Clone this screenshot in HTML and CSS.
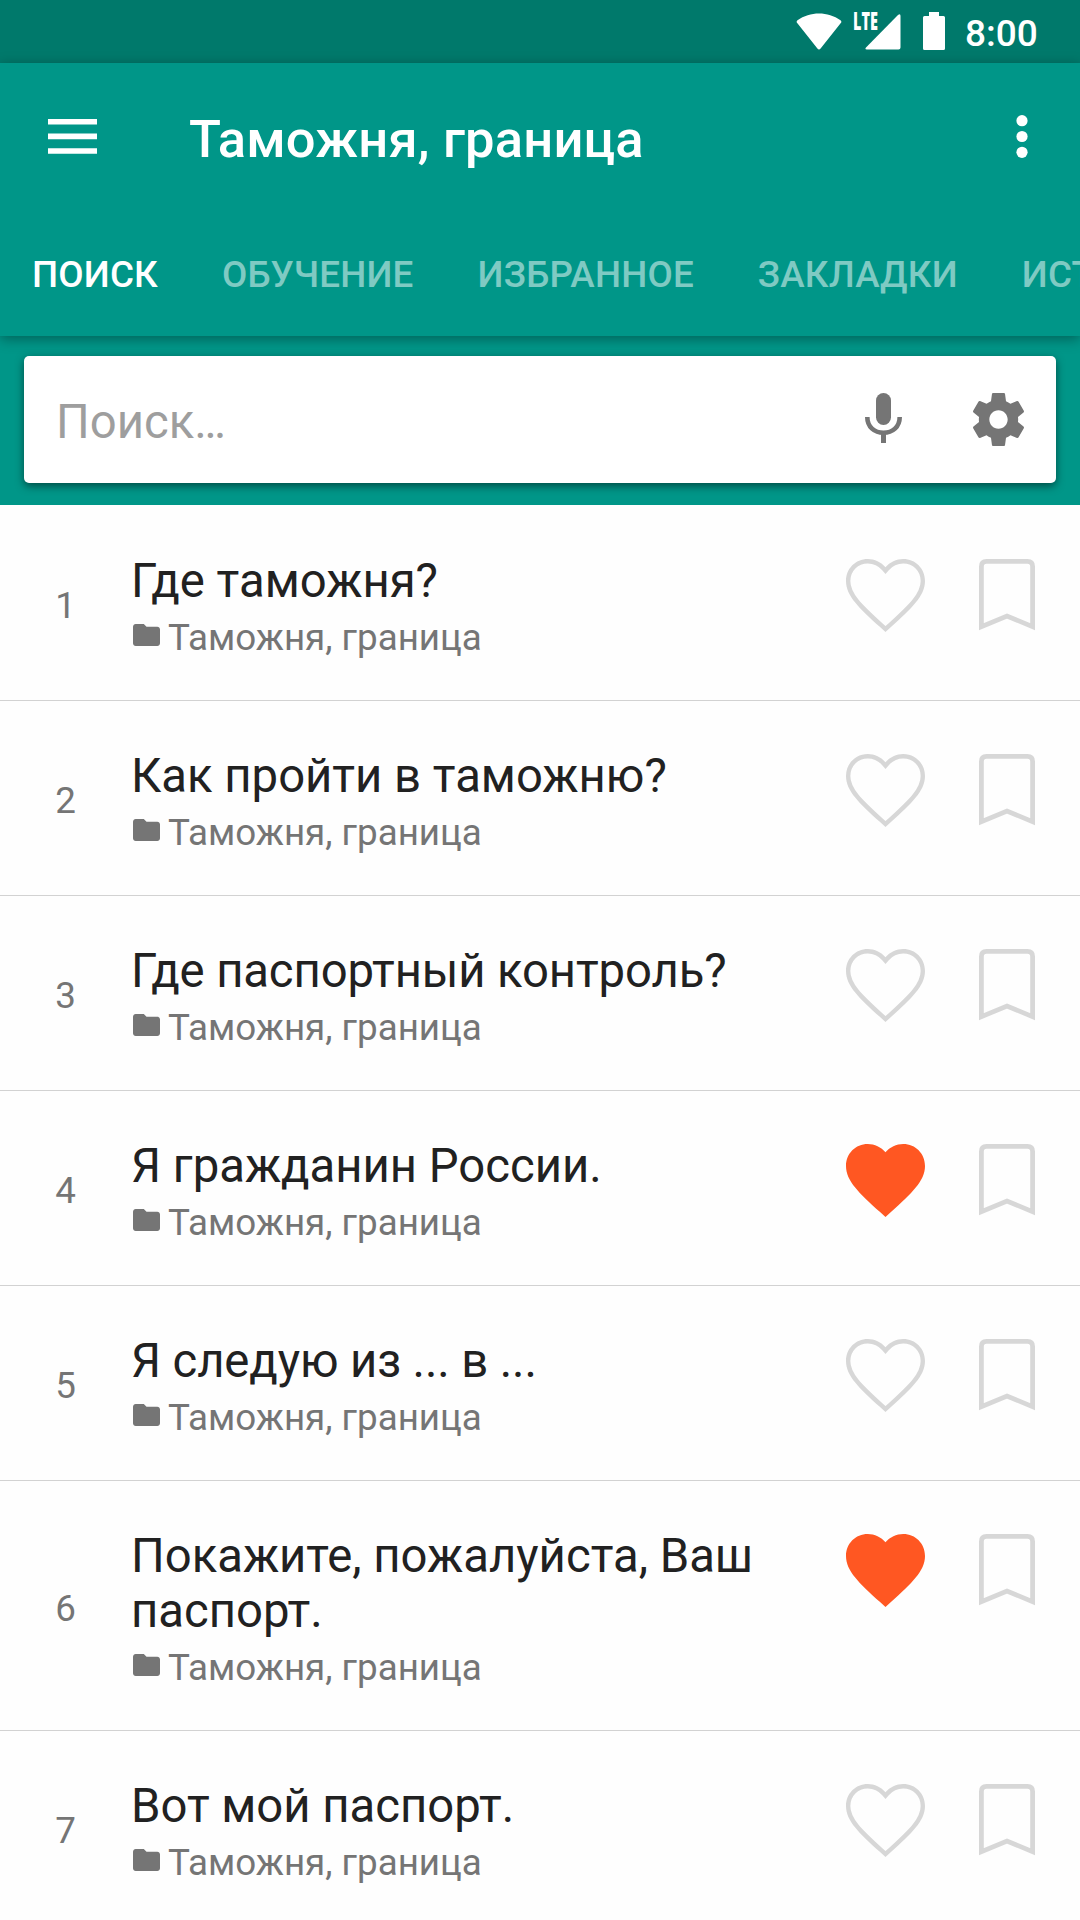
FILE: index.html
```html
<!DOCTYPE html>
<html lang="ru">
<head>
<meta charset="utf-8">
<title>Таможня, граница</title>
<link rel="stylesheet" href="styles.css">
</head>
<body>
<svg class="defs" aria-hidden="true">
  <defs>
    <path id="heart-shape" d="M12 21.35l-1.45-1.32C5.4 15.36 2 12.28 2 8.5 2 5.42 4.42 3 7.5 3c1.74 0 3.41.81 4.5 2.09C13.09 3.81 14.76 3 16.5 3 19.58 3 22 5.42 22 8.5c0 3.78-3.4 6.86-8.55 11.54L12 21.35z"/>
    <clipPath id="heart-clip"><use href="#heart-shape"/></clipPath>
    <symbol id="heart" viewBox="2 3 20 18.35" preserveAspectRatio="none"><use href="#heart-shape" clip-path="url(#heart-clip)" fill="none" stroke="currentColor" stroke-width="2.2"/></symbol>
    <symbol id="heart-full" viewBox="2 3 20 18.35" preserveAspectRatio="none"><use href="#heart-shape" fill="currentColor"/></symbol>
    <symbol id="bookmark" viewBox="0 0 56 72"><path d="M2.4 67.6V7.5Q2.4 2.4 7.5 2.4H48.5Q53.6 2.4 53.6 7.5V67.6L28 57Z" fill="none" stroke="currentColor" stroke-width="4.8" stroke-miterlimit="10"/></symbol>
    <symbol id="folder" viewBox="2 4 20 16" preserveAspectRatio="none"><path fill="currentColor" d="M10 4H4c-1.100 0-1.990.9-1.990 2L2 18c0 1.100.9 2 2 2h16c1.100 0 2-.9 2-2V8c0-1.100-.9-2-2-2h-8l-2-2z"/></symbol>
  </defs>
</svg>
<div class="screen">
  <header class="status">
    <svg class="wifi" viewBox="0 0 46 37"><path fill="#fff" d="M1.200 10C0.300 9 .5 8 1.500 7.300C14-1.700 32-1.700 44.500 7.300C45.500 8 45.700 9 44.800 10L24.600 35.500Q23 37.300 21.400 35.500Z"/></svg>
    <div class="cell">
      <span class="lte">LTE</span>
      <svg class="signal" viewBox="0 0 36 36"><path fill="#fff" d="M1 33.500L33 .9Q35.500-.8 35.500 2V33.500Q35.500 35.500 33.500 35.500H1.800Q-.5 35.300 1 33.500Z"/></svg>
    </div>
    <svg class="battery" viewBox="0 0 22 38"><path fill="#fff" d="M6 0H16V4H20.500Q22 4 22 5.500V36.500Q22 38 20.500 38H1.500Q0 38 0 36.500V5.500Q0 4 1.500 4H6Z"/></svg>
    <span class="time">8:00</span>
  </header>
  <div class="appbar">
    <div class="toolbar">
      <svg class="menu" viewBox="0 0 49 35"><path fill="#fff" d="M0 0H49V5.600H0ZM0 14.600H49V20.200H0ZM0 29.200H49V34.800H0Z"/></svg>
      <h1 class="title">Таможня, граница</h1>
      <svg class="more" viewBox="0 0 12 43"><g fill="#fff"><circle cx="6" cy="5.700" r="5.600"/><circle cx="6" cy="21.500" r="5.600"/><circle cx="6" cy="37.300" r="5.600"/></g></svg>
    </div>
    <nav class="tabs">
      <span class="tab active">ПОИСК</span>
      <span class="tab">ОБУЧЕНИЕ</span>
      <span class="tab">ИЗБРАННОЕ</span>
      <span class="tab">ЗАКЛАДКИ</span>
      <span class="tab">ИСТОРИЯ</span>
    </nav>
  </div>
  <div class="search">
    <div class="box">
      <span class="hint">Поиск…</span>
      <svg class="mic" viewBox="0 0 37 50"><rect x="11" width="15" height="32" rx="7.500" fill="#757575"/><path d="M2.300 24C2.300 34 9.500 39.800 18.500 39.800S34.700 34 34.700 24" fill="none" stroke="#757575" stroke-width="4.600"/><path d="M16 40H21V50H16Z" fill="#757575"/></svg>
      <svg class="gear" viewBox="2.270 2 19.460 20" preserveAspectRatio="none"><path fill="#757575" d="M19.430 12.980c.04-.32.070-.64.070-.98s-.03-.66-.07-.98l2.110-1.650c.19-.15.240-.42.120-.64l-2-3.460c-.12-.22-.39-.3-.61-.22l-2.490 1c-.52-.4-1.080-.73-1.690-.98l-.38-2.650C14.460 2.180 14.250 2 14 2h-4c-.25 0-.46.18-.49.42l-.38 2.650c-.61.25-1.170.59-1.690.98l-2.490-1c-.23-.09-.49 0-.61.22l-2 3.460c-.13.22-.07.49.12.64l2.110 1.650c-.04.32-.07.65-.07.98s.03.66.07.98l-2.110 1.650c-.19.15-.24.42-.12.64l2 3.460c.12.22.39.3.61.22l2.490-1c.52.4 1.080.73 1.690.98l.38 2.650c.03.24.24.42.49.42h4c.25 0 .46-.18.49-.42l.38-2.650c.61-.25 1.170-.59 1.690-.98l2.490 1c.23.09.49 0 .61-.22l2-3.460c.12-.22.07-.49-.12-.64l-2.110-1.650zM12 15.500c-1.930 0-3.500-1.570-3.500-3.500s1.570-3.500 3.500-3.500 3.500 1.570 3.500 3.500-1.570 3.500-3.500 3.500z"/></svg>
    </div>
  </div>
  <main class="list">
    <div class="row"><span class="num">1</span><div class="text"><p class="phrase">Где таможня?</p><p class="topic"><svg class="folder"><use href="#folder"/></svg>Таможня, граница</p></div><svg class="heart"><use href="#heart"/></svg><svg class="mark"><use href="#bookmark"/></svg></div>
    <div class="row"><span class="num">2</span><div class="text"><p class="phrase">Как пройти в таможню?</p><p class="topic"><svg class="folder"><use href="#folder"/></svg>Таможня, граница</p></div><svg class="heart"><use href="#heart"/></svg><svg class="mark"><use href="#bookmark"/></svg></div>
    <div class="row"><span class="num">3</span><div class="text"><p class="phrase snug">Где паспортный контроль?</p><p class="topic"><svg class="folder"><use href="#folder"/></svg>Таможня, граница</p></div><svg class="heart"><use href="#heart"/></svg><svg class="mark"><use href="#bookmark"/></svg></div>
    <div class="row"><span class="num">4</span><div class="text"><p class="phrase">Я гражданин России.</p><p class="topic"><svg class="folder"><use href="#folder"/></svg>Таможня, граница</p></div><svg class="heart liked"><use href="#heart-full"/></svg><svg class="mark"><use href="#bookmark"/></svg></div>
    <div class="row"><span class="num">5</span><div class="text"><p class="phrase snug">Я следую из ... в ...</p><p class="topic"><svg class="folder"><use href="#folder"/></svg>Таможня, граница</p></div><svg class="heart"><use href="#heart"/></svg><svg class="mark"><use href="#bookmark"/></svg></div>
    <div class="row"><span class="num">6</span><div class="text"><p class="phrase">Покажите, пожалуйста, Ваш паспорт.</p><p class="topic"><svg class="folder"><use href="#folder"/></svg>Таможня, граница</p></div><svg class="heart liked"><use href="#heart-full"/></svg><svg class="mark"><use href="#bookmark"/></svg></div>
    <div class="row"><span class="num">7</span><div class="text"><p class="phrase">Вот мой паспорт.</p><p class="topic"><svg class="folder"><use href="#folder"/></svg>Таможня, граница</p></div><svg class="heart"><use href="#heart"/></svg><svg class="mark"><use href="#bookmark"/></svg></div>
  </main>
</div>
</body>
</html>
```
FILE: styles.css
```css
* { box-sizing: border-box; }
body { margin: 0; font-family: Roboto, "Noto Sans", sans-serif; }
h1, p { margin: 0; }
svg { display: block; flex: none; }
.defs { position: absolute; width: 0; height: 0; }
.screen {
  width: 1080px;
  height: 1920px;
  overflow: hidden;
  display: flex;
  flex-direction: column;
  background: #fefefe;
}
.status {
  flex: none;
  height: 63px;
  background: #00796b;
  display: flex;
  align-items: flex-start;
  padding: 12px 40px 0 796px;
  color: #fff;
}
.wifi { width: 46px; height: 37px; margin-top: 1px; }
.cell { display: flex; width: 48px; margin-left: 11px; }
.lte {
  width: 26px;
  font: 800 24px/18px "Open Sans", sans-serif;
  transform: scaleX(.6);
  transform-origin: 0 0;
}
.signal { width: 36px; height: 36px; margin: 2px 0 0 -14px; }
.battery { width: 22px; height: 38px; margin-left: 22px; }
.time { font-size: 37px; font-weight: 500; line-height: 43px; margin: 0 0 0 20px; }
.appbar {
  flex: none;
  height: 273px;
  background: #009688;
  box-shadow: 0 3px 12px rgba(0, 0, 0, .35);
  position: relative;
  z-index: 1;
}
.toolbar { display: flex; align-items: center; height: 147px; padding: 0 52px 0 48px; }
.menu { width: 49px; height: 35px; }
.title { flex: 1; margin: 5px 0 0 92px; font-size: 52.500px; font-weight: 500; line-height: 62px; letter-spacing: .18px; color: #fff; white-space: nowrap; }
.more { width: 12px; height: 43px; }
.tabs { display: flex; height: 126px; align-items: center; overflow: hidden; }
.tab { flex: none; padding: 3px 32px 0; font-size: 36.750px; font-weight: 500; letter-spacing: .18px; color: #7fcac3; white-space: nowrap; }
.active { color: #fff; }
.search { flex: none; height: 169px; background: #009688; padding: 20px 24px 22px; }
.box {
  height: 127px;
  display: flex;
  align-items: center;
  background: #fff;
  border-radius: 5px;
  padding: 0 32px 0 32px;
  box-shadow: 0 3px 9px rgba(0, 0, 0, .5);
}
.hint { flex: 1; font-size: 47.250px; line-height: 55px; color: #9e9e9e; padding-top: 6px; }
.mic { width: 37px; height: 50px; margin: 0 71px 3px 0; }
.gear { width: 51px; height: 53px; }
.list { flex: 1; overflow: hidden; padding-top: 1px; }
.row { display: flex; align-items: flex-start; padding: 48px 45px 41px 0; border-bottom: 1px solid #d2d2d2; }
.num { width: 131px; align-self: center; padding-bottom: 2px; text-align: center; font-size: 36.750px; line-height: 43px; color: #757575; }
.text { flex: 1; }
.phrase { font-size: 47.250px; line-height: 55px; color: #212121; }
.snug { letter-spacing: -.12px; }
.topic { display: flex; margin-top: 7px; font-size: 36.750px; line-height: 43px; color: #757575; }
.folder { width: 27px; height: 22px; margin: 8px 8px 0 2px; }
.heart { width: 79px; height: 73px; margin-top: 5px; color: #d7d7d7; }
.liked { color: #ff5722; }
.mark { width: 56px; height: 72px; margin: 5px .5px 0 53.500px; color: #d7d7d7; }
```
